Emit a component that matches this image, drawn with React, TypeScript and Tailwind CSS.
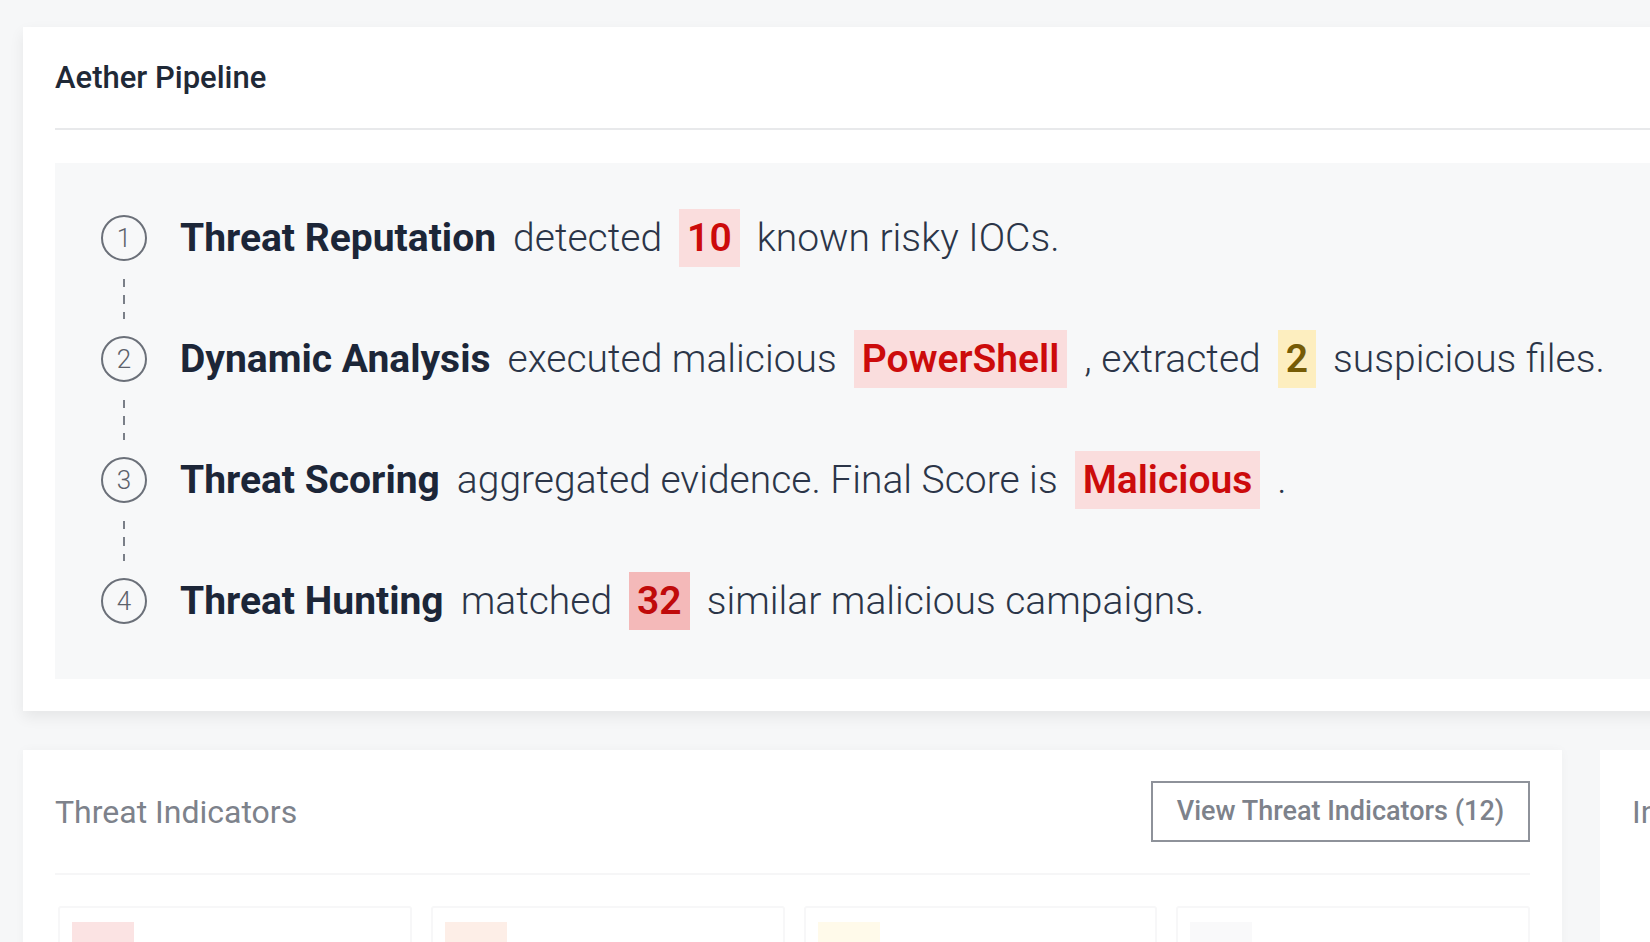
import React from "react";

const font = { fontFamily: "Roboto, 'Liberation Sans', sans-serif" };

function Circle({ n }: { n: number }) {
  return (
    <div className="w-[46px] h-[46px] rounded-full border-2 border-[#6b7079] flex items-center justify-center text-[26px] leading-none font-light text-[#5d626b] shrink-0">
      {n}
    </div>
  );
}

function Connector() {
  return (
    <div className="h-[63px] w-[46px] relative">
      <svg className="absolute left-0 -top-[6px]" width="46" height="76" viewBox="0 0 46 76">
        <line x1="23" y1="18" x2="23" y2="26" stroke="#7a7f88" strokeWidth="2" />
        <line x1="23" y1="34" x2="23" y2="43" stroke="#7a7f88" strokeWidth="2" />
        <line x1="23" y1="51" x2="23" y2="58" stroke="#7a7f88" strokeWidth="2" />
      </svg>
    </div>
  );
}

function Bold({ children }: { children: React.ReactNode }) {
  return <span className="font-bold text-[#1c2638]">{children}</span>;
}
function Light({ children }: { children: React.ReactNode }) {
  return <span className="font-light text-[#2b3548]">{children}</span>;
}
function Badge({ children, tone }: { children: React.ReactNode; tone: "red" | "yellow" | "strong" }) {
  const cls =
    tone === "red"
      ? "bg-[#fadddd] text-[#cc0b0b]"
      : tone === "yellow"
      ? "bg-[#fdeebf] text-[#765c06]"
      : "bg-[#f4b9b9] text-[#c00a0a]";
  return <span className={`h-[58px] px-[8px] flex items-center font-semibold ${cls}`}>{children}</span>;
}

function Row({ n, children }: { n: number; children: React.ReactNode }) {
  return (
    <div className="flex items-center h-[58px]">
      <Circle n={n} />
      <div className="ml-[33px] flex items-center gap-[17px] text-[39px] leading-none whitespace-nowrap">{children}</div>
    </div>
  );
}

export default function App() {
  return (
    <div className="w-[1650px] h-[942px] overflow-hidden bg-[#f6f7f8]" style={font}>
      <div className="pl-[23px] pt-[27px] w-[1800px]">
        <div className="bg-white shadow-[0_6px_14px_rgba(0,0,0,0.07)] px-[32px] pb-[32px]">
          <div className="h-[103px] flex items-center pt-[2px] border-b-2 border-[#e8e9eb]">
            <h1 className="text-[31px] font-medium text-[#1f2937]">Aether Pipeline</h1>
          </div>
          <div className="mt-[33px] bg-[#f7f8f9] pl-[46px] pt-[46px] pb-[49px]">
            <Row n={1}>
              <Bold>Threat Reputation</Bold>
              <Light>detected</Light>
              <Badge tone="red">10</Badge>
              <Light>known risky IOCs.</Light>
            </Row>
            <Connector />
            <Row n={2}>
              <Bold>Dynamic Analysis</Bold>
              <Light>executed malicious</Light>
              <Badge tone="red">PowerShell</Badge>
              <Light>, extracted</Light>
              <Badge tone="yellow">2</Badge>
              <Light>suspicious files.</Light>
            </Row>
            <Connector />
            <Row n={3}>
              <Bold>Threat Scoring</Bold>
              <Light>aggregated evidence. Final Score is</Light>
              <Badge tone="red">Malicious</Badge>
              <Light>.</Light>
            </Row>
            <Connector />
            <Row n={4}>
              <Bold>Threat Hunting</Bold>
              <Light>matched</Light>
              <Badge tone="strong">32</Badge>
              <Light>similar malicious campaigns.</Light>
            </Row>
          </div>
        </div>

        <div className="mt-[39px] flex gap-[38px]">
          <div className="w-[1539px] shrink-0 bg-white shadow-[0_0_10px_rgba(0,0,0,0.03)] px-[32px] pt-[31px]">
            <div className="flex items-center justify-between h-[61px]">
              <span className="text-[32px] text-[#7d828b]">Threat Indicators</span>
              <button className="w-[379px] h-[61px] border-2 border-[#8e929a] text-[27px] font-medium text-[#7d828b] flex items-center justify-center">
                View Threat Indicators (12)
              </button>
            </div>
            <div className="mt-[31px] border-t-2 border-[#f6f6f7]" />
            <div className="mt-[31px] grid grid-cols-4 gap-[19px] pl-[3px]">
              {["bg-[#fbe3e3]", "bg-[#fdeee7]", "bg-[#fffaea]", "bg-[#f9f9fa]"].map((c, i) => (
                <div key={i} className="h-[80px] border-2 border-[#f7f7f8] rounded-[3px] px-[12px] pt-[14px]">
                  <div className={`w-[62px] h-[24px] ${c}`} />
                </div>
              ))}
            </div>
          </div>
          <div className="w-[400px] shrink-0 bg-white pl-[32px] pt-[31px] overflow-hidden">
            <div className="h-[61px] flex items-center">
              <span className="text-[32px] text-[#7d828b]">In</span>
            </div>
          </div>
        </div>
      </div>
    </div>
  );
}
